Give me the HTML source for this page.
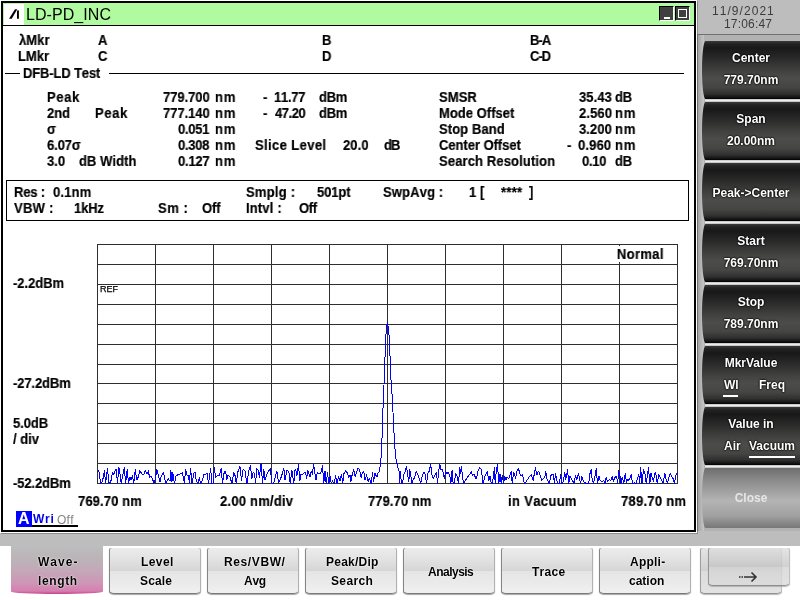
<!DOCTYPE html>
<html><head><meta charset="utf-8"><title>LD-PD_INC</title>
<style>
html,body{margin:0;padding:0}
body{width:800px;height:600px;overflow:hidden;background:#bdbdbd;position:relative;font-family:"Liberation Sans",sans-serif;font-size:14px;font-weight:bold;color:#000}
div,span,i,svg{position:absolute;display:block}
.t,.u{white-space:pre;line-height:16px;height:16px;font-kerning:none}
.t{transform:scaleX(.9286);transform-origin:0 0;will-change:transform;-webkit-text-stroke:.2px}
.u{will-change:transform}
#win{left:1px;top:1px;width:691px;height:527px;border:2px solid #000;background:#fff;box-shadow:0 0 0 1px #fff,1px 1px 0 1px #8c8c8c}
#tb{left:3px;top:3px;width:691px;height:22px;background:#b0fa9f;border-bottom:1px solid #000}
#ic{left:4px;top:4px;width:20px;height:21px;background:#fff}
.wb{top:6px;width:13px;height:13px;background:#404040;border:1px solid;border-color:#000 #fff #fff #000}
#sep1{left:5px;top:73px;width:15px;height:1px;background:#000}
#sep2{left:109px;top:73px;width:575px;height:1px;background:#000}
#stat{left:6px;top:180px;width:681px;height:39px;border:1px solid #000}
#side{left:697px;top:34px;width:103px;height:496px;background:linear-gradient(to right,#a4a4a4 0,#c6c6c6 6px,#b2b2b2 6px);border-top:1px solid #707070;border-left:1px solid #707070}
.sb{left:702px;width:98px;height:58px;border-radius:3.5px 0 0 3.5px/29px 0 0 29px;background:linear-gradient(to bottom,#3a3a3a 0,#222 5%,#181818 12%,#2a2a2a 30%,#40403e 50%,#4c4c4a 64%,#454543 80%,#303030 91%,#141414 97%,#000 100%);color:#fff;font-size:12px;text-shadow:0 0 1px #000,0 0 2px #000,0 0 2px #000}
.sb::after{content:"";position:absolute;left:3px;right:0;top:58px;height:3px;background:linear-gradient(to bottom,#b8b8b8,#f0f0f0 45%,#d0d0d0 80%,#999)}
.sb.dis{background:linear-gradient(to bottom,#6e6e6e 0,#8a8a8a 20%,#b4b4b4 55%,#a0a0a0 80%,#777 100%);color:#e6e6e6;text-shadow:none}
.sb.dis::after{display:none}
.sb.dis{height:60px}
.sb span{white-space:pre;line-height:16px;will-change:transform}
.sb .s1{left:0;width:98px;text-align:center}
.ul{height:2px;background:#fff}
#bot{left:0;top:546px;width:800px;height:54px;background:#fff}
.bb{top:548px;width:92px;height:46px;border-radius:2px 2px 5px 5px/2px 2px 3px 3px;background:linear-gradient(to bottom,#ececec 0,#e2e2e2 25%,#d6d6d6 49%,#e5e5e5 51%,#eaeaea 75%,#f1f1f1 100%);box-shadow:inset 1px 0 0 #858585,inset -1px 0 0 #b0b0b0,inset 0 -1px 0 #787878,0 1px 1px #a8a8a8}
.bb.sel{top:546px;height:48px;border-radius:0 0 46px 46px/0 0 2.5px 2.5px;background:linear-gradient(to bottom,#bdbdbd 0,#bbb4b8 25%,#c3a9b8 50%,#cf94b6 78%,#d57fb0 94%,#c8408c 100%);box-shadow:none}
.bb.ar{opacity:.8;background:linear-gradient(to bottom,#dedede 0,#d2d2d2 25%,#c6c6c6 49%,#d4d4d4 51%,#d8d8d8 75%,#dcdcdc 100%)}
.bt{text-shadow:0 0 2px #fff,0 0 1px #fff}
</style></head><body>
<div id="win"></div>
<div id="tb"></div>
<div id="ic"></div>
<svg style="left:4px;top:4px" width="20" height="21" viewBox="0 0 20 21"><path d="M5 14.8L7.7 14.8L13.3 5.3L11 5.3Z" fill="#000"/><path d="M13 6.6L14.9 6.6L14.9 14.8L13 14.8Z" fill="#000"/></svg>
<div class="wb" style="left:659px"><i style="left:4px;top:10px;width:6px;height:2px;background:#fff"></i></div>
<div class="wb" style="left:675px"><i style="left:2px;top:2px;width:6.5px;height:7px;border:1.5px solid #fff"></i></div>
<div id="sep1"></div><div id="sep2"></div>
<div id="stat"></div>
<svg style="left:0;top:0" width="800" height="600" viewBox="0 0 800 600">
<g fill="#2e2e2e"><rect x="97" y="244" width="1" height="240"/><rect x="155" y="244" width="1" height="240"/><rect x="213" y="244" width="1" height="240"/><rect x="271" y="244" width="1" height="240"/><rect x="329" y="244" width="1" height="240"/><rect x="387" y="244" width="1" height="240"/><rect x="445" y="244" width="1" height="240"/><rect x="503" y="244" width="1" height="240"/><rect x="561" y="244" width="1" height="240"/><rect x="619" y="244" width="1" height="240"/><rect x="677" y="244" width="1" height="240"/><rect x="97" y="244" width="581" height="1"/><rect x="97" y="264" width="581" height="1"/><rect x="97" y="284" width="581" height="1"/><rect x="97" y="304" width="581" height="1"/><rect x="97" y="324" width="581" height="1"/><rect x="97" y="344" width="581" height="1"/><rect x="97" y="364" width="581" height="1"/><rect x="97" y="383" width="581" height="1"/><rect x="97" y="403" width="581" height="1"/><rect x="97" y="423" width="581" height="1"/><rect x="97" y="443" width="581" height="1"/><rect x="97" y="463" width="581" height="1"/><rect x="97" y="483" width="581" height="1"/></g>
<polyline fill="none" stroke="#0000ff" stroke-width="1" stroke-linejoin="round" shape-rendering="crispEdges" points="97.5,469.8 98.8,471.0 100.6,483.5 102.5,481.6 104.4,470.4 105.6,482.9 107.5,468.5 108.8,482.2 110.6,482.9 112.5,472.2 113.8,474.8 115.0,471.0 116.2,469.1 117.5,482.9 118.8,467.2 120.0,473.5 121.2,483.5 123.1,473.5 124.4,467.2 125.6,483.5 127.2,469.1 128.5,483.5 130.0,477.2 131.2,479.8 132.5,476.0 133.8,483.5 135.2,469.8 136.9,479.8 138.1,477.2 139.8,470.4 141.9,474.1 143.8,474.8 145.4,470.4 146.9,474.1 148.5,471.0 149.4,477.2 151.2,476.6 152.5,478.5 153.8,483.5 155.0,479.8 156.9,469.8 158.1,474.8 160.0,482.2 161.2,476.0 163.5,472.2 165.0,479.8 166.2,483.5 168.1,478.5 170.0,481.0 170.9,470.4 171.9,482.2 172.8,472.2 174.4,483.5 176.2,475.4 178.1,474.8 181.2,473.5 182.5,472.9 184.4,483.5 185.6,469.1 186.9,474.8 188.5,476.0 189.4,482.2 190.6,468.5 191.9,483.5 193.8,473.5 195.0,472.2 196.5,481.6 197.8,483.5 199.4,477.9 200.6,483.5 201.9,481.6 203.8,474.8 205.6,474.1 207.1,472.9 208.5,483.5 210.6,468.5 211.9,483.5 213.1,482.9 214.4,467.9 215.6,477.2 217.5,475.4 219.4,476.0 221.2,467.9 222.5,483.5 224.4,471.0 225.6,471.6 226.9,479.8 228.1,474.8 230.0,477.2 231.9,483.5 233.8,472.9 235.0,475.4 236.2,482.9 238.1,471.0 240.0,466.6 241.5,481.0 243.1,469.1 245.0,471.0 246.9,483.5 248.8,470.4 250.4,466.0 251.9,478.5 253.1,472.2 254.4,473.5 255.6,482.9 256.9,468.5 258.1,470.4 259.4,477.2 261.2,462.9 262.5,483.5 263.8,469.1 265.0,480.4 266.9,474.1 268.8,471.0 270.2,468.5 271.9,482.9 273.8,483.5 275.6,474.8 276.9,471.0 278.5,482.9 280.0,479.8 281.2,477.2 283.8,468.5 285.0,479.8 286.9,470.4 288.8,471.6 290.2,483.5 291.9,470.4 293.8,483.5 295.0,469.8 295.6,469.1 296.9,476.0 298.5,464.1 299.8,481.0 301.0,474.1 302.5,474.8 304.0,472.9 305.6,472.9 306.6,478.5 307.9,470.4 309.4,474.8 310.0,477.2 311.2,471.0 312.5,474.8 313.5,464.1 314.8,472.2 316.0,479.8 317.2,472.9 319.0,474.1 320.6,473.5 322.5,466.0 323.8,483.5 325.0,471.0 326.2,483.5 327.5,472.9 328.8,483.5 330.2,476.0 331.2,482.9 332.5,481.0 334.0,483.5 335.6,476.0 337.2,483.5 338.5,476.6 340.0,481.0 341.5,474.1 342.8,482.9 344.0,473.5 345.6,471.0 346.9,472.2 348.8,477.2 350.0,474.8 350.9,481.6 352.5,472.9 353.8,469.8 355.2,476.6 356.9,471.0 358.1,467.9 359.4,469.1 361.2,477.9 362.5,472.2 363.8,471.0 365.0,480.4 366.5,474.8 368.1,481.6 369.4,478.5 371.2,483.5 372.5,472.9 373.5,481.6 375.0,473.5 376.9,477.2 377.9,473.2 379.0,472.0 380.0,467.0 381.0,458.3 382.0,438.5 383.0,408.4 384.0,384.8 385.0,357.8 386.0,334.5 387.0,325.5 387.5,322.2 388.0,325.5 389.0,334.5 390.0,355.5 391.0,379.5 392.0,393.8 393.0,412.4 394.0,433.0 395.0,448.5 396.0,459.0 397.0,463.5 398.0,468.0 399.0,471.0 399.4,482.2 400.2,471.0 401.5,483.5 402.5,483.5 403.8,474.8 405.0,472.2 406.5,466.6 408.1,477.2 408.8,481.6 409.8,469.8 411.0,477.2 411.9,483.5 413.1,479.8 414.8,477.2 416.2,471.0 417.8,474.8 419.4,479.1 420.6,483.5 422.2,476.0 423.8,472.2 425.0,474.1 426.5,482.9 428.1,472.9 429.4,471.0 430.6,464.1 431.9,474.8 433.1,478.5 435.0,474.8 436.5,472.2 437.5,483.5 438.8,469.8 439.8,464.1 441.0,469.8 442.5,469.1 443.5,474.8 444.4,478.5 445.6,471.0 446.9,474.1 448.1,472.2 449.8,475.4 450.9,483.5 452.1,469.8 453.1,483.5 454.4,483.5 455.6,473.5 456.9,475.4 458.5,483.5 459.8,467.2 460.6,473.5 461.5,466.6 462.5,477.2 463.5,483.5 464.8,481.6 466.9,477.9 469.4,474.8 471.2,471.6 472.5,475.4 474.0,474.1 476.2,479.1 478.1,471.0 479.8,467.9 481.0,469.1 482.2,476.6 483.1,483.5 484.4,477.9 485.6,474.8 487.2,471.6 488.8,480.4 490.0,476.0 491.2,482.9 492.5,483.5 494.4,467.9 495.2,483.5 496.2,472.2 497.5,464.1 498.8,483.5 500.0,474.1 501.2,483.5 502.2,475.4 503.5,483.5 504.8,476.0 506.0,479.8 507.2,477.2 508.8,479.1 510.0,474.8 511.2,471.0 512.2,483.5 513.5,472.9 514.8,474.8 515.6,478.5 516.9,471.0 518.5,468.5 519.8,473.5 521.2,476.0 522.5,474.1 523.5,480.4 524.4,483.5 526.2,481.6 528.1,478.5 530.0,476.0 531.5,474.8 533.1,480.4 534.4,473.5 535.4,467.9 536.9,474.8 538.1,471.6 539.4,472.2 540.6,477.2 541.9,480.4 543.5,478.5 544.8,477.2 545.6,471.0 546.9,478.5 548.1,481.6 549.4,483.5 550.6,476.0 551.9,474.1 553.5,474.8 554.4,483.5 555.6,473.5 556.9,481.0 558.1,483.5 559.4,483.5 560.6,474.1 561.9,483.5 563.1,482.2 564.8,472.2 565.6,479.1 566.5,477.2 567.5,469.1 568.8,483.5 570.0,476.0 571.2,478.5 572.5,480.4 574.0,483.5 575.6,475.4 576.9,479.8 578.5,473.5 579.8,479.8 580.6,482.9 581.9,476.6 583.1,480.4 584.4,482.2 585.0,482.9 587.5,483.5 588.8,482.9 590.0,473.5 591.2,469.8 592.2,479.8 593.5,483.5 594.8,477.2 596.2,468.5 597.5,483.5 599.0,476.0 600.2,480.4 601.9,481.6 603.8,480.4 605.0,483.5 606.2,477.2 607.5,481.6 609.4,479.8 611.0,480.4 612.2,476.0 613.5,481.6 615.0,477.2 616.5,476.6 617.8,483.5 618.5,470.4 619.8,474.8 621.0,483.5 622.2,477.2 623.8,483.5 625.2,473.5 626.5,482.2 627.8,479.1 629.0,480.4 630.2,477.2 631.2,474.8 632.5,483.5 634.4,482.9 636.2,483.5 637.5,478.5 638.8,474.8 639.8,482.2 640.6,467.2 641.9,483.5 643.5,469.8 645.0,473.5 646.2,483.5 647.2,477.2 648.5,467.2 649.8,483.5 651.0,473.5 652.2,477.2 653.5,481.6 654.8,473.5 655.6,472.2 657.2,483.5 658.8,474.8 660.0,477.2 661.5,480.4 663.1,482.9 664.8,473.5 666.0,479.1 667.5,483.5 669.4,475.4 670.6,473.5 671.9,477.2 673.1,478.5 674.4,483.5 676.0,474.8 677.0,472.9"/>
</svg>
<div style="left:16px;top:511px;width:16px;height:16px;background:#0000ff"></div>
<div style="left:32px;top:525px;width:46px;height:2px;background:#000"></div>
<div id="side"></div>
<div class="sb" style="top:41px"><span class="s1" style="top:9px">Center</span><span class="s1" style="top:31px">779.70nm</span></div>
<div class="sb" style="top:102px"><span class="s1" style="top:9px">Span</span><span class="s1" style="top:31px">20.00nm</span></div>
<div class="sb" style="top:163px"><span class="s1" style="top:22px">Peak-&gt;Center</span></div>
<div class="sb" style="top:224px"><span class="s1" style="top:9px">Start</span><span class="s1" style="top:31px">769.70nm</span></div>
<div class="sb" style="top:285px"><span class="s1" style="top:9px">Stop</span><span class="s1" style="top:31px">789.70nm</span></div>
<div class="sb" style="top:346px"><span class="s1" style="top:9px">MkrValue</span><span class="s2" style="left:22px;top:31px">Wl</span><span class="s2" style="left:57px;top:31px">Freq</span><i class="ul" style="left:21px;width:15px;top:49px"></i></div>
<div class="sb" style="top:407px"><span class="s1" style="top:9px">Value in</span><span class="s2" style="left:22px;top:31px">Air</span><span class="s2" style="left:47px;top:31px">Vacuum</span><i class="ul" style="left:47px;width:46px;top:49px"></i></div>
<div class="sb dis" style="top:468px"><span class="s1" style="top:22px">Close</span></div>
<div id="bot"></div>
<div class="bb sel" style="left:11px"></div>
<div class="bb" style="left:109px"></div>
<div class="bb" style="left:207px"></div>
<div class="bb" style="left:305px"></div>
<div class="bb" style="left:403px"></div>
<div class="bb" style="left:501px"></div>
<div class="bb" style="left:599px"></div>
<div class="bb ar" style="left:700px;width:82px"></div>
<div class="bb ar" style="left:708px;width:82px;height:38px"></div>
<svg style="left:736px;top:570px" width="24" height="14" viewBox="0 0 24 14"><g fill="none" stroke="#333" stroke-width="1.6"><path d="M8 7H20M15.5 2.5L20 7L15.5 11.5"/></g><rect x="3" y="6.2" width="1.5" height="1.6" fill="#333"/><rect x="5.5" y="6.2" width="1.5" height="1.6" fill="#333"/></svg>
<span class="u" style="left:25.69px;top:7px;font-size:16px;font-weight:normal;letter-spacing:0.06px;">LD-PD_INC</span>
<span class="t" style="left:18.69px;top:32px;letter-spacing:0.06px;">λMkr</span>
<span class="t" style="left:97.68px;top:32px;">A</span>
<span class="t" style="left:18.13px;top:48px;">LMkr</span>
<span class="t" style="left:97.97px;top:48px;">C</span>
<span class="t" style="left:321.63px;top:32px;">B</span>
<span class="t" style="left:321.63px;top:48px;">D</span>
<span class="t" style="left:530.13px;top:32px;letter-spacing:-1.02px;">B-A</span>
<span class="t" style="left:530.47px;top:48px;letter-spacing:-1.08px;">C-D</span>
<span class="t" style="left:22.63px;top:65px;letter-spacing:-0.15px;">DFB-LD Test</span>
<span class="t" style="left:46.63px;top:89px;letter-spacing:0.72px;">Peak</span>
<span class="t" style="left:47.05px;top:105px;">2nd</span>
<span class="t" style="left:95.13px;top:105px;letter-spacing:0.72px;">Peak</span>
<span class="t" style="left:46.99px;top:121px;">σ</span>
<span class="t" style="left:47.02px;top:137px;letter-spacing:-0.13px;">6.07σ</span>
<span class="t" style="left:47.20px;top:153px;">3.0</span>
<span class="t" style="left:79.47px;top:153px;letter-spacing:0.05px;">dB Width</span>
<span class="t" style="left:163.19px;top:89px;letter-spacing:-0.07px;">779.700</span>
<span class="t" style="left:163.19px;top:105px;letter-spacing:-0.07px;">777.140</span>
<span class="t" style="left:178.24px;top:121px;letter-spacing:-0.31px;">0.051</span>
<span class="t" style="left:178.24px;top:137px;letter-spacing:-0.30px;">0.308</span>
<span class="t" style="left:178.24px;top:153px;letter-spacing:-0.25px;">0.127</span>
<span class="t" style="left:214.89px;top:89px;letter-spacing:0.98px;">nm</span>
<span class="t" style="left:214.89px;top:105px;letter-spacing:0.98px;">nm</span>
<span class="t" style="left:214.89px;top:121px;letter-spacing:0.98px;">nm</span>
<span class="t" style="left:214.89px;top:137px;letter-spacing:0.98px;">nm</span>
<span class="t" style="left:214.89px;top:153px;letter-spacing:0.98px;">nm</span>
<span class="t" style="left:262.74px;top:89px;">-</span>
<span class="t" style="left:274.18px;top:89px;letter-spacing:-0.31px;">11.77</span>
<span class="t" style="left:318.97px;top:89px;letter-spacing:-0.30px;">dBm</span>
<span class="t" style="left:262.74px;top:105px;">-</span>
<span class="t" style="left:274.80px;top:105px;letter-spacing:-0.49px;">47.20</span>
<span class="t" style="left:318.97px;top:105px;letter-spacing:-0.30px;">dBm</span>
<span class="t" style="left:255.38px;top:137px;letter-spacing:0.41px;">Slice Level</span>
<span class="t" style="left:342.55px;top:137px;letter-spacing:0.07px;">20.0</span>
<span class="t" style="left:384.47px;top:137px;letter-spacing:-1.08px;">dB</span>
<span class="t" style="left:439.23px;top:89px;letter-spacing:0.08px;">SMSR</span>
<span class="t" style="left:438.73px;top:105px;letter-spacing:0.02px;">Mode Offset</span>
<span class="t" style="left:439.23px;top:121px;letter-spacing:0.09px;">Stop Band</span>
<span class="t" style="left:439.07px;top:137px;letter-spacing:-0.05px;">Center Offset</span>
<span class="t" style="left:439.23px;top:153px;letter-spacing:0.13px;">Search Resolution</span>
<span class="t" style="left:578.70px;top:89px;letter-spacing:0.06px;">35.43</span>
<span class="t" style="left:615.07px;top:89px;letter-spacing:-0.22px;">dB</span>
<span class="t" style="left:578.55px;top:105px;letter-spacing:0.12px;">2.560</span>
<span class="t" style="left:614.74px;top:105px;letter-spacing:1.04px;">nm</span>
<span class="t" style="left:578.70px;top:121px;letter-spacing:0.08px;">3.200</span>
<span class="t" style="left:614.74px;top:121px;letter-spacing:1.04px;">nm</span>
<span class="t" style="left:566.99px;top:137px;">-</span>
<span class="t" style="left:578.49px;top:137px;letter-spacing:0.14px;">0.960</span>
<span class="t" style="left:614.74px;top:137px;letter-spacing:1.04px;">nm</span>
<span class="t" style="left:582.09px;top:153px;letter-spacing:-0.31px;">0.10</span>
<span class="t" style="left:615.07px;top:153px;letter-spacing:-0.22px;">dB</span>
<span class="t" style="left:13.93px;top:184px;letter-spacing:-0.21px;">Res :</span>
<span class="t" style="left:53.49px;top:184px;letter-spacing:0.20px;">0.1nm</span>
<span class="t" style="left:14.31px;top:200px;letter-spacing:0.31px;">VBW :</span>
<span class="t" style="left:73.58px;top:200px;letter-spacing:-0.16px;">1kHz</span>
<span class="t" style="left:158.03px;top:200px;letter-spacing:0.59px;">Sm :</span>
<span class="t" style="left:201.97px;top:200px;letter-spacing:-0.14px;">Off</span>
<span class="t" style="left:246.13px;top:184px;letter-spacing:0.26px;">Smplg :</span>
<span class="t" style="left:316.60px;top:184px;letter-spacing:-0.11px;">501pt</span>
<span class="t" style="left:382.63px;top:184px;letter-spacing:0.14px;">SwpAvg :</span>
<span class="t" style="left:245.63px;top:200px;letter-spacing:0.17px;">Intvl :</span>
<span class="t" style="left:299.47px;top:200px;letter-spacing:-0.36px;">Off</span>
<span class="t" style="left:468.58px;top:184px;">1</span>
<span class="t" style="left:480.27px;top:184px;">[</span>
<span class="t" style="left:501.46px;top:184px;letter-spacing:0.29px;">****</span>
<span class="t" style="left:528.59px;top:184px;">]</span>
<span class="t" style="left:616.73px;top:246px;letter-spacing:0.39px;background:#fff;padding-left:1px;margin-left:-1px;">Normal</span>
<span class="u" style="left:99.76px;top:281px;font-size:9px;font-weight:normal;letter-spacing:0.05px;-webkit-text-stroke:.25px;">REF</span>
<span class="t" style="left:13.24px;top:275px;letter-spacing:-0.04px;">-2.2dBm</span>
<span class="t" style="left:13.49px;top:375px;letter-spacing:-0.12px;">-27.2dBm</span>
<span class="t" style="left:12.60px;top:415px;letter-spacing:-0.06px;">5.0dB</span>
<span class="t" style="left:12.87px;top:431px;">/ div</span>
<span class="t" style="left:13.49px;top:475px;letter-spacing:-0.12px;">-52.2dBm</span>
<span class="t" style="left:77.94px;top:493px;letter-spacing:0.13px;">769.70 nm</span>
<span class="t" style="left:219.55px;top:493px;letter-spacing:0.24px;">2.00 nm/div</span>
<span class="t" style="left:368.44px;top:493px;letter-spacing:0.07px;">779.70 nm</span>
<span class="t" style="left:507.84px;top:493px;letter-spacing:0.37px;">in Vacuum</span>
<span class="t" style="left:620.84px;top:493px;letter-spacing:0.28px;">789.70 nm</span>
<span class="u" style="left:17.90px;top:511px;font-size:16px;color:#fff;">A</span>
<span class="u" style="left:33.19px;top:511px;font-size:12px;color:#0000f0;letter-spacing:0.77px;">Wri</span>
<span class="u" style="left:56.93px;top:512px;font-size:12px;font-weight:normal;color:#858585;letter-spacing:0.27px;text-shadow:1px 1px 0 #fff;">Off</span>
<span class="u" style="left:711.59px;top:3px;font-size:12px;font-weight:normal;color:#3c3c3c;letter-spacing:1.05px;">11/9/2021</span>
<span class="u" style="left:724.09px;top:16px;font-size:12px;font-weight:normal;color:#3c3c3c;letter-spacing:0.19px;">17:06:47</span>
<span class="u bt" style="left:37.99px;top:554px;font-size:12px;letter-spacing:1.04px;">Wave-</span>
<span class="u bt" style="left:37.91px;top:573px;font-size:12px;letter-spacing:0.62px;">length</span>
<span class="u bt" style="left:140.95px;top:554px;font-size:12px;letter-spacing:0.43px;">Level</span>
<span class="u bt" style="left:139.65px;top:573px;font-size:12px;letter-spacing:0.16px;">Scale</span>
<span class="u bt" style="left:223.70px;top:554px;font-size:12px;letter-spacing:0.61px;">Res/VBW/</span>
<span class="u bt" style="left:244.20px;top:573px;font-size:12px;letter-spacing:-0.28px;">Avg</span>
<span class="u bt" style="left:326.20px;top:554px;font-size:12px;letter-spacing:0.23px;">Peak/Dip</span>
<span class="u bt" style="left:331.40px;top:573px;font-size:12px;letter-spacing:0.36px;">Search</span>
<span class="u bt" style="left:427.70px;top:564px;font-size:12px;letter-spacing:-0.51px;">Analysis</span>
<span class="u bt" style="left:531.62px;top:564px;font-size:12px;letter-spacing:0.26px;">Trace</span>
<span class="u bt" style="left:629.60px;top:554px;font-size:12px;letter-spacing:0.24px;">Appli-</span>
<span class="u bt" style="left:628.93px;top:573px;font-size:12px;">cation</span>
</body></html>
